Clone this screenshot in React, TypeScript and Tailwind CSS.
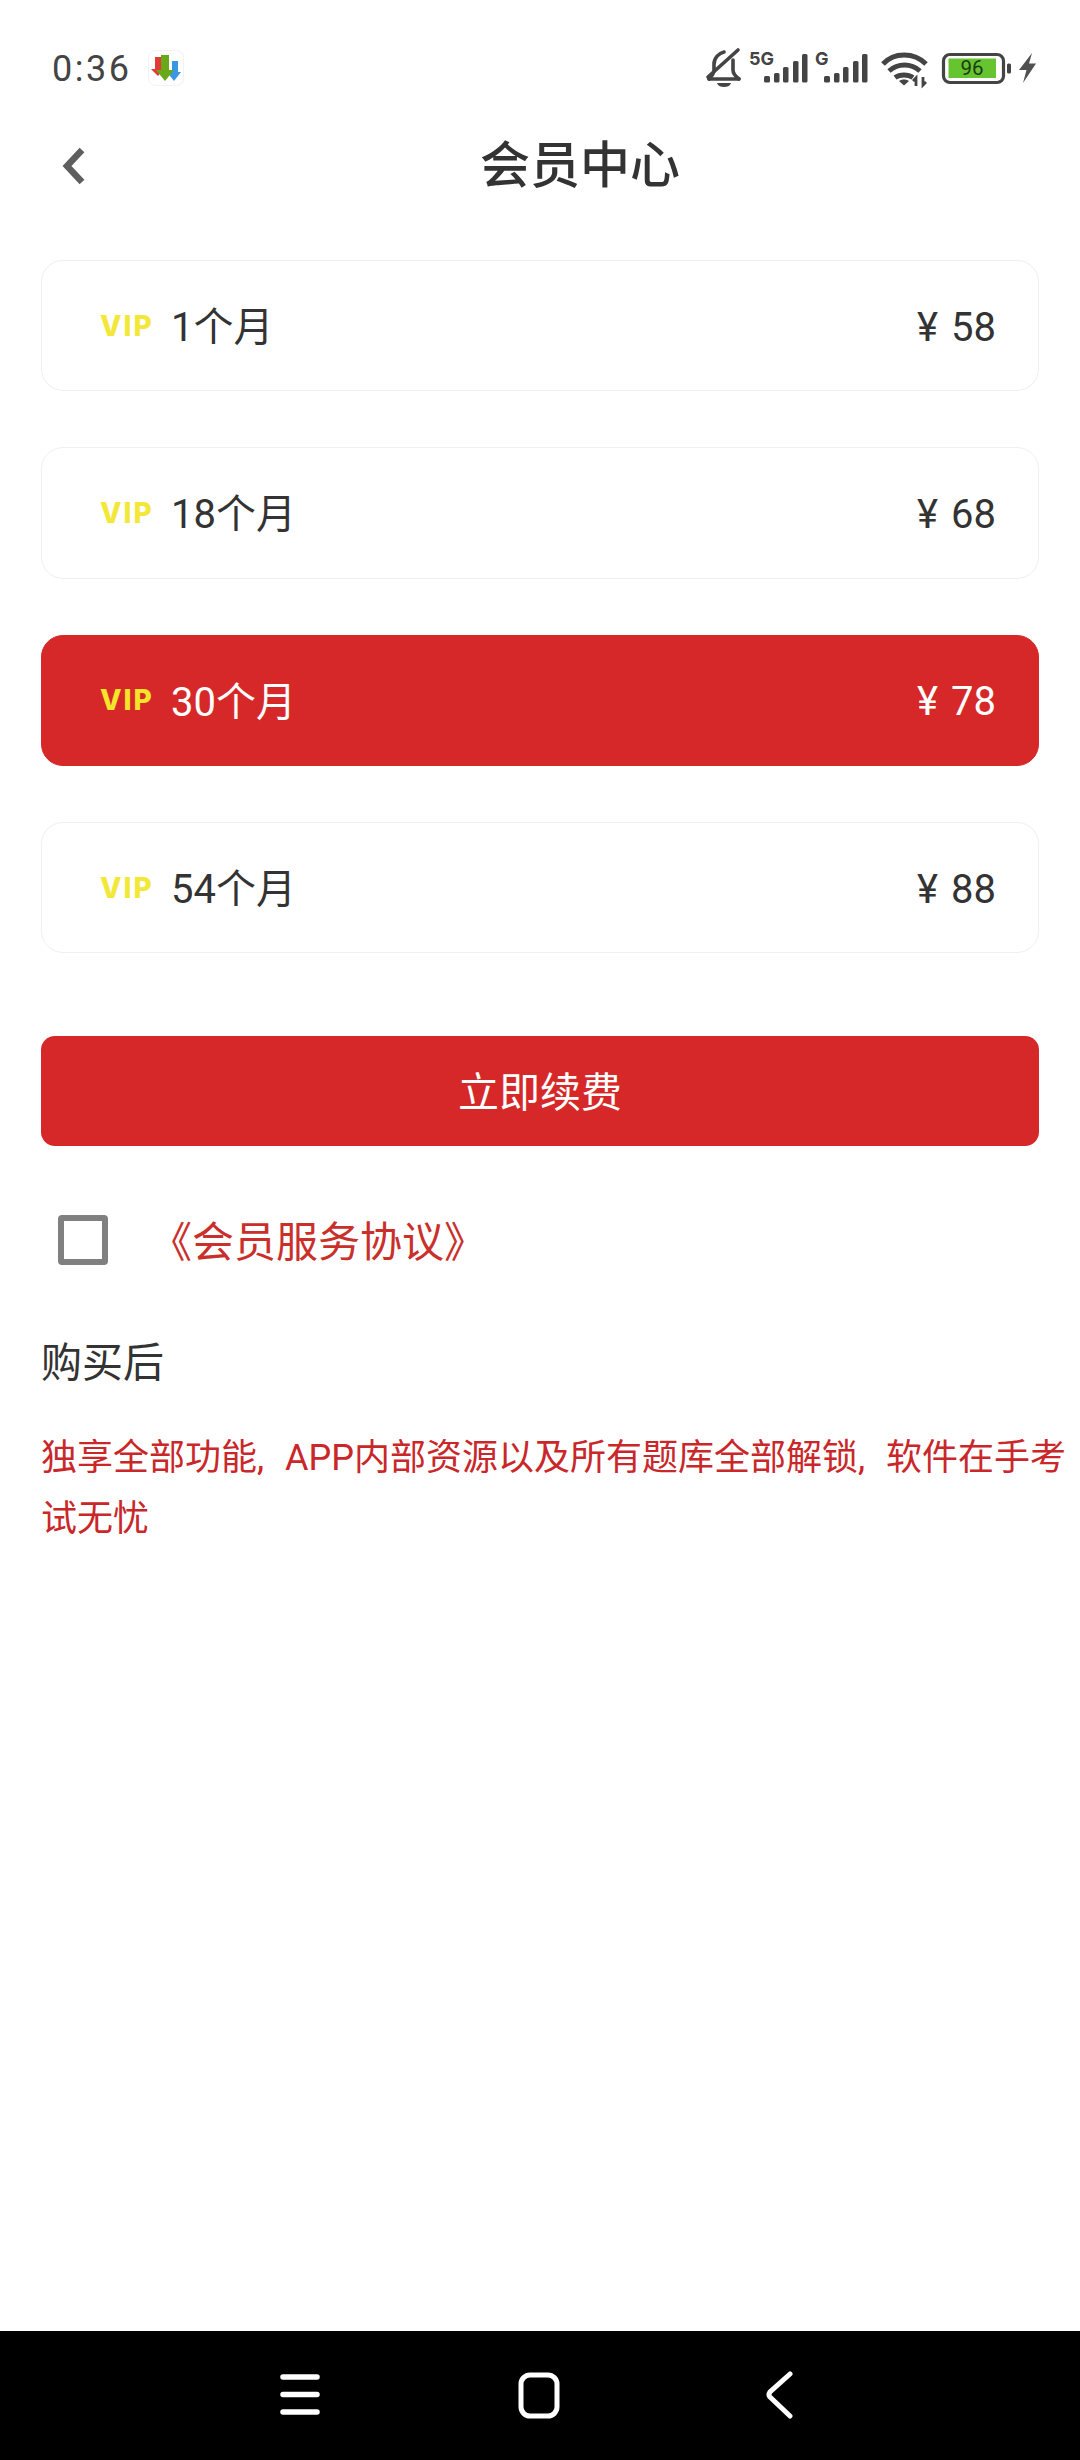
const FONT = "font-['Roboto','Noto_Sans_CJK_SC',sans-serif]";

function StatusIcons() {
  return (
    <svg width="400" height="70" viewBox="0 0 400 70" className="mt-[30px] ml-auto block shrink-0 self-start">
      <g fill="none" stroke="#444" strokeWidth="3.600" strokeLinecap="round" strokeLinejoin="round">
        <path d="M29 49h30" />
        <path d="M29 49c3-3 5-5 5-9v-6c0-6 5-11 10-12" />
        <path d="M53 30v10c0 4 2 6 6 9" />
        <path d="M28 47L58 20" />
      </g>
      <path d="M37 53h14c-1 3-4 4-7 4s-6-1-7-4z" fill="#444" />
      <text x="69" y="34.500" fontFamily="Inter, sans-serif" fontWeight="700" fontSize="18" fill="#444">5G</text>
      <g fill="#444">
        <rect x="84" y="46" width="6" height="6.5" rx="1.5" />
        <rect x="94" y="43" width="5.5" height="9.5" rx="1.5" />
        <rect x="103" y="37" width="5.5" height="15.5" rx="1.5" />
        <rect x="113" y="31" width="5.5" height="21.5" rx="1.5" />
        <rect x="122" y="24" width="5.5" height="28.5" rx="1.5" />
      </g>
      <text x="135" y="34.500" fontFamily="Inter, sans-serif" fontWeight="700" fontSize="18" fill="#444">G</text>
      <g fill="#444">
        <rect x="144" y="46" width="6" height="6.5" rx="1.5" />
        <rect x="154" y="43" width="5.5" height="9.5" rx="1.5" />
        <rect x="163" y="37" width="5.5" height="15.5" rx="1.5" />
        <rect x="173" y="31" width="5.5" height="21.5" rx="1.5" />
        <rect x="182" y="24" width="5.5" height="28.5" rx="1.5" />
      </g>
      <g fill="none" stroke="#444" strokeWidth="5">
        <path d="M203 34c11-12 31-12 43 0" />
        <path d="M209 41c9-8 22-8 31 0" />
        <path d="M215 47.500c5-3.500 13-3.500 18 0" />
      </g>
      <path d="M219 51c3-2 7-2 10 0l-5 4.500z" fill="#444" />
      <path d="M236 56v-8l-3 3M243 47v8l3-3" fill="none" stroke="#444" strokeWidth="2.800" />
      <rect x="263.500" y="24.500" width="60" height="28" rx="6.500" fill="none" stroke="#444" strokeWidth="3.200" />
      <rect x="268.500" y="28.500" width="47.500" height="19.500" fill="#66c431" />
      <text x="292" y="45" textAnchor="middle" fontFamily="Roboto, sans-serif" fontSize="20.500" fill="#1e3a12">96</text>
      <rect x="327" y="33.500" width="4" height="10" rx="1.500" fill="#444" />
      <path d="M352 23L339 40h7.500L343 53l13-19.500h-7L352 23z" fill="#505050" />
    </svg>
  );
}

function DownloadIcon() {
  return (
    <svg width="36" height="36" viewBox="0 0 36 36" className="ml-[17px] block shrink-0">
      <rect x="0.500" y="0.500" width="35" height="35" rx="7" fill="#fff" stroke="#f2f2f2" />
      <path d="M7 7h6v12h3l-6 7-7-7h4z" fill="#e23a36" />
      <path d="M24 11h6v11h3l-7 9-7-9h5z" fill="#3a97e4" />
      <path d="M13 5h8v15h5l-9 11-9-11h5z" fill="#69a819" />
    </svg>
  );
}

function Plan({ months, price, active }: { months: string; price: string; active?: boolean }) {
  return (
    <div
      className={
        active
          ? "flex h-[131.33px] items-center rounded-[22px] border border-[#d62828] bg-[#d62828] pl-[58px] pr-[42px] text-white"
          : "flex h-[131.33px] items-center rounded-[22px] border border-[#f0f0f0] bg-white pl-[58px] pr-[42px] text-[#333333]"
      }
    >
      <span
        className={
          active
            ? "w-[71px] shrink-0 font-['Inter',sans-serif] text-[28px] leading-none font-extrabold tracking-[2px] text-[#f5e42c]"
            : "w-[71px] shrink-0 font-['Inter',sans-serif] text-[28px] leading-none font-extrabold tracking-[2px] text-[#f3e83a]"
        }
      >
        VIP
      </span>
      <span className="pt-[5px] text-[40px] leading-none">{months}</span>
      <span className="ml-auto pt-[4px] text-[40px] leading-none [word-spacing:3px]">{price}</span>
    </div>
  );
}

export default function App() {
  return (
    <div className={`${FONT} flex h-[2460px] w-[1080px] flex-col overflow-hidden bg-white`}>
      <div className="flex h-[136px] shrink-0 items-center pl-[52px]">
        <span className="pt-[2px] text-[36px] leading-none font-[450] tracking-[2.5px] text-[#444444]">0:36</span>
        <DownloadIcon />
        <StatusIcons />
      </div>

      <div className="flex h-[60px] shrink-0 items-center pl-[62px]">
        <svg width="24" height="38" viewBox="0 0 24 38" className="shrink-0">
          <path d="M20 3L5 19l15 16" fill="none" stroke="#5e5e5e" strokeWidth="6.500" />
        </svg>
        <h1 className="ml-[394px] text-[50px] leading-none font-medium text-[#333333]">会员中心</h1>
      </div>

      <div className="mt-[64px] flex flex-col gap-[56px] px-[41px]">
        <Plan months="1个月" price="¥ 58" />
        <Plan months="18个月" price="¥ 68" />
        <Plan months="30个月" price="¥ 78" active />
        <Plan months="54个月" price="¥ 88" />
      </div>

      <div className="mx-[41px] mt-[83px] flex h-[110px] shrink-0 items-center justify-center rounded-[14px] bg-[#d62828] pt-[5px] text-[41px] leading-none text-white">
        立即续费
      </div>

      <div className="mt-[69px] flex items-center pl-[58px]">
        <div className="h-[50px] w-[50px] shrink-0 rounded-[4px] border-[6px] border-[#808080]" />
        <span className="ml-[42px] pt-[5px] text-[42px] leading-none text-[#c9302c]">《会员服务协议》</span>
      </div>

      <div className="mt-[78px] pl-[41px] text-[41px] leading-none text-[#333333]">购买后</div>

      <p className="mt-[44px] pl-[41px] text-[36px] leading-[61px] text-[#c9272a] [word-spacing:12px]">
        独享全部功能, APP内部资源以及所有题库全部解锁, 软件在手考试无忧
      </p>

      <div className="mt-auto flex h-[129px] shrink-0 items-start bg-black pl-[279px] pt-[40px]">
        <svg width="42" height="46" viewBox="0 0 42 46" className="shrink-0">
          <path d="M4 6h34M4 23.500h34M4 41h34" stroke="#fff" strokeWidth="5.500" strokeLinecap="round" />
        </svg>
        <svg width="44" height="48" viewBox="0 0 44 48" className="ml-[196px] shrink-0">
          <rect x="4" y="4" width="36" height="41" rx="9" fill="none" stroke="#fff" strokeWidth="5" />
        </svg>
        <svg width="30" height="48" viewBox="0 0 30 48" className="ml-[204px] shrink-0">
          <path d="M25 3L5 21q-2 3 0 5l20 19" fill="none" stroke="#fff" strokeWidth="5" strokeLinecap="round" />
        </svg>
      </div>
    </div>
  );
}
